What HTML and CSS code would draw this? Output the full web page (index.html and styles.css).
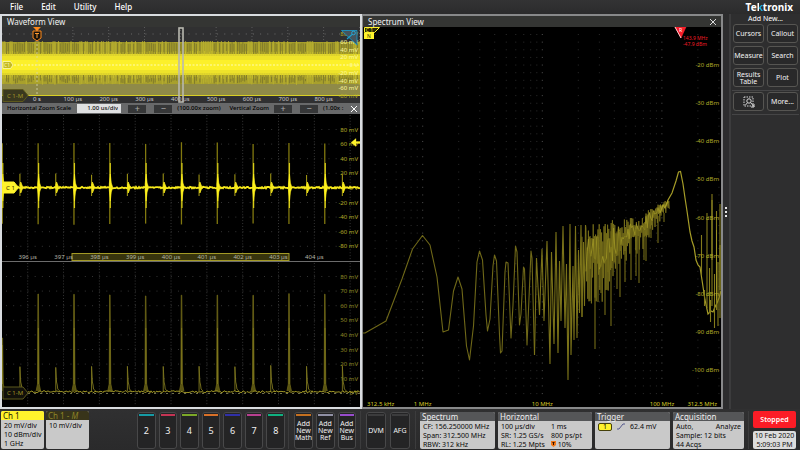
FILE: index.html
```html
<!DOCTYPE html>
<html lang="en">
<head>
<meta charset="utf-8">
<title>Tektronix</title>
<link rel="stylesheet" href="styles.css">
</head>
<body>
<header class="topbar">
  <nav class="menu">
    <button>File</button><button>Edit</button><button>Utility</button><button>Help</button>
  </nav>
  <div class="logo">Te<span class="logo-k">k</span>tronix</div>
</header>

<main class="workspace">
  <section class="view view-wave">
    <div class="view-title"><h2>Waveform View</h2></div>
    <svg class="plot plot-overview" id="overview" viewBox="2 27 358 76"></svg>
    <div class="zoombar">
      <div class="zoom-group">
        <label for="hscale">Horizontal Zoom Scale</label>
        <input id="hscale" value="1.00 us/div">
      </div>
      <div class="zoom-steps"><button>+</button><button>−</button></div>
      <span class="zoom-h">(100.00x zoom)</span>
      <span>Vertical Zoom</span>
      <div class="zoom-steps"><button>+</button><button>−</button></div>
      <span>(1.00x :</span>
      <button class="close" aria-label="Close"><svg viewBox="0 0 8 8"><path d="M1 1L7 7M7 1L1 7"/></svg></button>
    </div>
    <svg class="plot" id="zoomed" viewBox="2 114 358 148"></svg>
    <svg class="plot" id="math" viewBox="2 262 358 145"></svg>
  </section>

  <section class="view view-spectrum">
    <div class="view-title"><h2>Spectrum View</h2>
      <button class="close" aria-label="Close"><svg viewBox="0 0 8 8"><path d="M1 1L7 7M7 1L1 7"/></svg></button>
    </div>
    <svg class="plot" id="spectrum" viewBox="363 27 358 380"></svg>
  </section>

  <div class="grip"><i></i><i></i><i></i></div>

  <aside class="sidebar">
    <h2>Add New...</h2>
    <div class="side-grid">
      <button>Cursors</button><button>Callout</button>
      <button>Measure</button><button>Search</button>
      <button>Results Table</button><button>Plot</button>
    </div>
    <div class="side-grid side-more">
      <button aria-label="Zoom area">
        <svg class="area-icon" viewBox="0 0 12 12">
          <rect x="1" y="1" width="9" height="9" stroke-dasharray="1.5 1"/>
          <circle cx="6" cy="5" r="2.2"/>
          <path d="M4.5 6.7L2.5 9M7.5 6.5L11 10.5M11 8v3H8"/>
        </svg>
      </button>
      <button>More...</button>
    </div>
  </aside>
</main>

<footer class="dock">
  <div class="dock-group">
    <section class="badge badge-ch1"><h3>Ch 1</h3><p>20 mV/div</p><p>10 dBm/div</p><p>1 GHz</p></section>
    <section class="badge badge-math"><h3>Ch 1 - <em>M</em></h3><p>10 mV/div</p></section>
  </div>
  <div class="dock-group keys channels">
    <button class="c2">2</button><button class="c3">3</button><button class="c4">4</button><button class="c5">5</button><button class="c6">6</button><button class="c7">7</button><button class="c8">8</button>
  </div>
  <div class="dock-group keys adders">
    <button class="math">Add New Math</button><button class="ref">Add New Ref</button><button class="bus">Add New Bus</button>
  </div>
  <div class="dock-group keys tools">
    <button>DVM</button><button>AFG</button>
  </div>
  <div class="dock-group infos">
    <section class="badge info-spectrum"><h3>Spectrum</h3><p>CF: 156.250000 MHz</p><p>Span: 312.500 MHz</p><p>RBW: 312 kHz</p></section>
    <section class="badge info-horizontal"><h3>Horizontal</h3>
      <div class="pairs">
        <span>100 µs/div</span><span>1 ms</span>
        <span>SR: 1.25 GS/s</span><span>800 ps/pt</span>
        <span>RL: 1.25 Mpts</span><span><svg class="pos-icon" viewBox="0 0 5 6"><path d="M0 0H5V4L2.500 6L0 4Z" fill="#f07818"/><path d="M1.500 1.500H3.500M2.500 1.500V4" stroke="#301000"/></svg> 10%</span>
      </div>
    </section>
    <section class="badge info-trigger"><h3>Trigger</h3>
      <div class="trig"><b>1</b><svg viewBox="0 0 8 7"><path d="M0 6H2L6 1H8"/></svg><span>62.4 mV</span></div>
    </section>
    <section class="badge info-acq"><h3>Acquisition</h3><div class="split"><span>Auto,</span><span>Analyze</span></div><p>Sample: 12 bits</p><p>44 Acqs</p></section>
  </div>
  <div class="status">
    <button class="stopped">Stopped</button>
    <div class="clock"><span>10 Feb 2020</span><span>5:09:03 PM</span></div>
  </div>
</footer>
<script src="script.js"></script>
</body>
</html>
```

FILE: styles.css
```css
* { box-sizing: border-box; }

body {
  margin: 0;
  min-height: 100vh;
  background: #2b2b2c;
  color: #f2f2f2;
  font: 7px/9px "Noto Sans", "Open Sans", sans-serif;
}

h2, h3, p { margin: 0; font-weight: 400; font-size: inherit; }
button { margin: 0; padding: 0; border: 0; background: none; color: inherit; font: inherit; }

/* top bar */
.topbar {
  display: flex;
  justify-content: space-between;
  align-items: center;
  height: 14px;
  padding: 0 7px 0 10px;
  background: linear-gradient(#333334, #2b2b2c);
}
.menu { display: flex; gap: 18px; font-size: 8px; line-height: 12px; font-weight: 500; }
.menu button { color: #fff; }
.logo { font-size: 10px; line-height: 12px; font-weight: 700; color: #fff; }
.logo-k {
  background: linear-gradient(90deg, #fff 40%, #18b0dc 40%);
  -webkit-background-clip: text;
  background-clip: text;
  color: transparent;
}

/* workspace */
.workspace { display: grid; grid-template-columns: 362fr 361fr 6px 71px; }
.view { min-width: 0; background: #000; }
.view-wave { border: 2px solid #d9dce0; }
.view-spectrum { border: solid #88898a; border-width: 2px 2px 2px 1px; }
.view-title {
  display: flex;
  justify-content: space-between;
  align-items: center;
  height: 11px;
  padding: 0 4px 0 5px;
  background: #343533;
  font-size: 8px;
  line-height: 11px;
}
.plot { display: block; width: 100%; height: auto; background: #000; }
.plot-overview { background: #303031; }
.plot text { font-size: 6px; }
.plot .tiny { font-size: 5px; }
.close { width: 8px; height: 8px; flex: none; }
.close svg { display: block; fill: none; stroke: #dcdcdc; stroke-width: 1; }

.zoombar {
  display: flex;
  align-items: center;
  height: 11px;
  padding: 0 2px 0 5px;
  gap: 5px;
  background: #68696a;
  color: #000;
  font-size: 6px;
  font-weight: 500;
  line-height: 9px;
  white-space: nowrap;
}
.zoom-group { display: flex; gap: 6px; align-items: center; }
.zoombar input {
  width: 44px;
  height: 9px;
  padding: 0 3px;
  border: 0;
  background: #dfe0e1;
  color: #111;
  font: inherit;
  text-align: right;
}
.zoom-steps { display: flex; gap: 8px; }
.zoom-group + .zoom-steps { margin-left: 2px; }
.zoom-steps button {
  width: 18px;
  height: 8px;
  background: #363738;
  color: #a5a5a5;
  font-size: 9px;
  line-height: 8px;
}
.zoom-h { margin-right: 4px; }
.zoombar .close { margin-left: auto; }
.zoombar .close svg { stroke: #fff; }

.grip {
  display: flex;
  flex-direction: column;
  justify-content: center;
  align-items: center;
  gap: 2px;
  background: #2c2c2d;
}
.grip i { width: 2px; height: 2px; background: #e8e8e8; }

/* sidebar */
.sidebar { padding: 0 1px; border-left: 2px solid #3c3c3d; background: #2e2e2f; }
.sidebar h2 { font-size: 7px; line-height: 9px; text-align: center; color: #fff; }
.side-grid { display: grid; grid-template-columns: 1fr 1fr; gap: 3px; padding: 1px 1px 3px; border-bottom: 1px solid #454546; }
.side-more { padding-top: 1px; }
.side-grid button {
  height: 19px;
  border: 1px solid #565552;
  border-radius: 3px;
  background: #29292a;
  line-height: 7px;
  color: #f4f4f4;
}
.area-icon { display: block; width: 12px; height: 12px; margin: auto; fill: none; stroke: #d8d8d8; stroke-width: 1; }

/* bottom dock */
.dock {
  display: flex;
  height: 41px;
  padding: 2px 4px 1px 1px;
  background: linear-gradient(#303031, #2a2a2b);
}
.dock-group { display: flex; gap: 2px; }
.badge { width: 43px; border-radius: 2px; overflow: hidden; background: #c9c9c9; color: #0a0a0a; white-space: nowrap; }
.badge h3 { height: 9px; margin-bottom: 1px; padding: 0 2px; font-size: 8px; line-height: 9px; background: #555658; color: #f0f0f0; }
.badge p { padding: 0 3px; }
.badge-ch1 h3 { background: #fff32c; color: #1c1a00; }
.badge-math h3 { background: #38341a; color: #8d8428; }

.channels { margin-left: auto; width: 148px; }
.keys { gap: 3px; padding-top: 1px; }
.keys button {
  position: relative;
  flex: 1;
  border: 1px solid #484849;
  border-radius: 3px;
  background: #242425;
  line-height: 7px;
  color: #f0f0f0;
}
.keys button::before {
  content: "";
  position: absolute;
  top: 1px;
  left: 1px;
  right: 1px;
  height: 2px;
  background: #3c3c3d;
}
.channels button { font-size: 9px; }
.adders { width: 62px; margin-left: 3px; padding-left: 5px; box-sizing: content-box; border-left: 1px solid #3c3c3d; }
.tools { width: 44px; gap: 4px; margin: 0 5px 0 4px; padding-left: 5px; box-sizing: content-box; border-left: 1px solid #3c3c3d; }
.keys .c2::before { background: #169aa4; }
.keys .c3::before { background: #c43454; }
.keys .c4::before { background: #7ca828; }
.keys .c5::before { background: #d87028; }
.keys .c6::before { background: #3030a8; }
.keys .c7::before { background: #b84090; }
.keys .c8::before { background: #10b080; }
.keys .math::before { background: #c47020; }
.keys .ref::before { background: #9090a4; }
.keys .bus::before { background: #984ccc; }

.infos { gap: 3px; padding: 1px 4px 0; border: solid #3c3c3d; border-width: 0 1px; }
.info-spectrum, .info-trigger { width: 75px; }
.info-horizontal { width: 94px; }
.info-acq { width: 71px; }
.pairs { display: grid; grid-template-columns: 50px 1fr; padding: 0 3px; }
.split { display: flex; justify-content: space-between; padding: 0 3px; }
.pos-icon { width: 5px; height: 6px; }
.trig { display: flex; align-items: center; gap: 5px; padding: 0 3px; }
.trig b { width: 14px; height: 8px; border: 1px solid #45400a; border-radius: 2px; background: #fff32c; font-weight: 400; line-height: 6px; text-align: center; }
.trig svg { width: 8px; height: 7px; fill: none; stroke: #55588c; }

.status { display: flex; flex-direction: column; justify-content: space-between; width: 43px; margin-left: 4px; }
.stopped { height: 17px; border-radius: 2px; background: #fb1c26; color: #fff; font-weight: 600; }
.clock { display: flex; flex-direction: column; border-radius: 2px; background: #dcdcdc; color: #111; line-height: 9px; text-align: center; }
```

FILE: script.js
```js
const NS = "http://www.w3.org/2000/svg";

function add(svg, tag, attrs, text) {
  const el = document.createElementNS(NS, tag);
  for (const key in attrs) el.setAttribute(key, attrs[key]);
  if (text !== undefined) el.textContent = text;
  svg.appendChild(el);
  return el;
}
function path(svg, d, stroke, width = 1, extra = {}) {
  return add(svg, "path", { d, fill: "none", stroke, "stroke-width": width, ...extra });
}
function label(svg, x, y, text, fill, anchor = "middle", cls = "") {
  return add(svg, "text", { x, y: y + 2, fill, "text-anchor": anchor, class: cls }, text);
}
function makeRandom(seed) {
  return () => (seed = (seed * 16807) % 2147483647) / 2147483647;
}

const rnd = makeRandom(4217);
const DIV = 35.83;

/* Full-record overview */
function drawOverview(svg) {
  let grid = "";
  for (let x = 37; x < 360; x += DIV) grid += `M${x} 27V95`;
  path(svg, grid, "#5c5c5c", 1, { "stroke-dasharray": "1 2" });
  path(svg, "M2 34H360", "#6a6a6a", 1, { "stroke-dasharray": "1 6.17" });

  add(svg, "rect", { x: 2, y: 42, width: 358, height: 53, fill: "#8f8a48" });
  add(svg, "rect", { x: 2, y: 42, width: 358, height: 42, fill: "#a8a02c" });
  let light = "", dark = "";
  for (let x = 3; x < 360; x += 1.79) {
    if (rnd() > 0.4) dark += `M${x} ${42 + rnd() * 2}V${80 + rnd() * 4}`;
    else light += `M${x} 41V${82 + rnd() * 3}`;
  }
  path(svg, dark, "#77722a", 0.8);
  path(svg, light, "#bdb430", 0.8);
  add(svg, "rect", { x: 2, y: 54, width: 358, height: 21, fill: "#e3d82c" });
  let tips = "";
  for (let x = 3; x < 360; x += 2.4) tips += `M${x} ${51 + rnd() * 2}V${76 + rnd() * 3}`;
  path(svg, tips, "#d6cb2c", 1, { opacity: 0.6 });
  add(svg, "rect", { x: 2, y: 56, width: 358, height: 17, fill: "#eee32a" });
  add(svg, "rect", { x: 2, y: 60, width: 358, height: 10, fill: "#fcf02a" });
  path(svg, "M14 65H360", "#fffbb0", 1, { "stroke-dasharray": "2 1.500" });
  path(svg, "M2 95.500H360", "#d8cf24");
  path(svg, "M37 40V96", "#d8d8b0", 1, { "stroke-dasharray": "2 2", opacity: 0.8 });

  label(svg, 37, 99, "0 s", "#d8d8d8");
  for (let i = 1; i < 9; i++) label(svg, 37 + i * DIV, 99, i * 100 + " µs", "#c8c8c8");
  for (let i = 0; i < 9; i++) {
    const v = 80 - i * 20;
    label(svg, 358, 34 + i * 7.75, v ? v + " mV" : "0 V", i === 0 || i === 8 ? "#b5ad2c" : "#fff9a0", "end");
  }

  add(svg, "rect", { x: 179, y: 28, width: 4, height: 74, fill: "none", stroke: "#b8b8b0", "stroke-width": 1.6 });

  path(svg, "M33.500 27H40.500L37 31Z", "#ff8a1c", 0.5, { fill: "#ff8a1c" });
  path(svg, "M33 31H41V38L37 41L33 38Z", "#ff8a1c", 1, { fill: "#17120c" });
  path(svg, "M35 33.500H39M37 33.500V38", "#ff9a30", 1);

  path(svg, "M341.500 30.500H357V45Z", "#18a0d0", 0.8, { fill: "#46545c" });
  path(svg, "M352 34.500L347 39", "#18a0d0", 1.2);
  add(svg, "circle", { cx: 353.5, cy: 33, r: 1.8, fill: "#46545c", stroke: "#28b0e0", "stroke-width": 0.9 });

  path(svg, "M3 61.500H10.500L13 65L10.500 68.500H3Z", "#fffbb8", 0.8, { fill: "#c4ba24" });
  label(svg, 7, 65, "C1", "#fffbb8", "middle", "tiny");
  drawMathBadge(svg, 95.5, "#3a381f");
}

function drawMathBadge(svg, y, fill) {
  path(svg, `M3 ${y - 6}H23L28 ${y}L23 ${y + 6}H3Z`, "#5d581c", 1, { fill });
  label(svg, 7, y, "C 1-M", "#a09628", "start");
}

/* Shared dotted graticule of the zoom plots */
function drawGrid(svg, top, bottom, firstRow) {
  let cols = "", rows = "";
  for (let x = 27.7; x < 360; x += DIV) cols += `M${x} ${top}V${bottom}`;
  for (let y = firstRow; y < bottom; y += 14.6) rows += `M6 ${y}H360`;
  path(svg, cols, "#353535", 1, { "stroke-dasharray": "1 1.920" });
  path(svg, rows, "#343434", 1, { "stroke-dasharray": "1 6.166" });
}

/* Zoomed channel 1 trace */
function drawZoomed(svg) {
  drawGrid(svg, 115, 260, 129.5);
  for (let i = 0; i < 9; i++) {
    const v = 80 - i * 20;
    label(svg, 358, 129.5 + i * 14.6, v ? v + " mV" : "0 V", "#b4ab26", "end");
  }
  add(svg, "rect", { x: 72, y: 253.500, width: 217, height: 7, fill: "#37340d", stroke: "#a39a26" });
  for (let i = 0; i < 9; i++) label(svg, 27.7 + i * DIV, 256.5, 396 + i + " µs", "#b4b4a8");
  path(svg, "M2 261.500H360", "#6c6c6c");

  for (let i = 0; i < 10; i++) {
    const x = 2.3 + i * DIV;
    path(svg, `M${x} ${142 + rnd() * 2}V${223 + rnd() * 2}`, "#81780f", 1.3);
    path(svg, `M${x + .5} 163V208`, "#d8cd18", 1.2);
    path(svg, `M${x - .5} 184L${x + .5} 174L${x + 1.500} 183L${x + 3} 187.500L${x + 1.500} 192L${x + .5} 201L${x - .5} 190Z`, "#fff21c", 0.6, { fill: "#fff21c" });
    const s = x + DIV / 2 - 0.3;
    path(svg, `M${s} ${173 + rnd() * 2}V196`, "#9b9114", 1.1);
    path(svg, `M${s} 185L${s + .8} 182L${s + 3} 187.500L${s + .8} 193Z`, "#f6e91c", 0.8, { fill: "#f6e91c" });
  }
  let d = "M2 187.5";
  for (let x = 3; x <= 360; x += 1) d += `L${x} ${(187.6 + (rnd() - 0.5) * 1.6).toFixed(1)}`;
  path(svg, d, "#f7ea1c", 1.8);

  path(svg, "M3 182H14L18.500 187.500L14 193H3Z", "#fff32c", 1, { fill: "#fff32c", "stroke-linejoin": "round" });
  label(svg, 10.5, 187.5, "C 1", "#2a2600");
  path(svg, "M351 142.500L356 138.500V141.500H360V143.500H356V146.500Z", "#fff32c", 0.3, { fill: "#fff32c" });
}

/* Zoomed math trace */
function drawMath(svg) {
  drawGrid(svg, 263, 406, 276.5);
  for (let i = 0; i < 9; i++) {
    const v = 80 - i * 10;
    label(svg, 358, 276.5 + i * 14.6, v ? v + " mV" : "0 V", "#8d8620", "end");
  }
  for (let i = 0; i < 10; i++) {
    const x = 2.3 + i * DIV;
    const top = i ? 293 + rnd() * 3 : 338;
    path(svg, `M${x - 2} 391L${x - .6} 384L${x - .2} ${top}H${x + .3}L${x + 1} 384L${x + 2.500} 391`, "#6c6516", 0.8, { fill: "#575212" });
    path(svg, `M${x + .2} ${i ? 328 : 345}V384`, "#857d1e", 0.8);
    const s = x + DIV / 2 - 0.3;
    path(svg, `M${s} 391V${365 + rnd() * 3}L${s + .8} 382L${s + 1.500} 385L${s + 2} 389L${s + 4} 391`, "#7d761e", 0.9);
  }
  let d = "M28 391.5";
  for (let x = 29; x <= 360; x += 1) d += `L${x} ${(391.7 + (rnd() - 0.5) * 2).toFixed(1)}`;
  path(svg, d, "#9d9424", 1);
  path(svg, "M28 393.500H360", "#70704c", 1, { "stroke-dasharray": "2 4" });
  drawMathBadge(svg, 393, "#11100a");
}

/* Spectrum: x is log frequency, one decade = 119.6 */
function drawSpectrum(svg) {
  let minor = "", major = "";
  for (let dec = -1; dec <= 2; dec++) {
    for (let n = 1; n < 10; n++) {
      const x = 422.7 + 119.6 * (dec + Math.log10(n));
      if (x < 364 || x > 721) continue;
      if (n === 1) major += `M${x} 34V396`;
      else minor += `M${x} 34V396`;
    }
  }
  path(svg, minor, "#2c2c2c", 1, { "stroke-dasharray": "1 6.640" });
  path(svg, major, "#505050", 1, { "stroke-dasharray": "1 6.640" });

  const low = [363,333, 365,333, 386,321, 402,279, 412.5,249, 422.5,235.5, 430,245, 437,277, 443,332, 448.5,330, 453.5,291, 458,277, 462,289, 466.5,346, 469.5,360, 473.5,326, 477,262, 479.5,251, 482.5,260, 486,315, 487.5,331, 490,319, 493,266, 494.5,255, 496.5,261, 499.5,335, 500.5,353, 502,351, 505,272, 506,262, 508,263, 511,338, 513,305, 515.5,246, 517,252, 519.5,325, 521,314, 523.5,267, 524.5,269, 527,345, 531,251, 532,258, 534.5,355];
  const fast = [534.5,355, 536.5,258, 539.5,315, 542,249, 544,321, 547,241, 550,364, 551.5,252, 554,344, 556,232, 558,353, 559.5,261, 561,321, 563,226, 565,328, 566.5,264, 568,380, 570,224, 571,355, 573,266, 574,340, 575.5,226, 577,338, 578.5,250, 579.5,313, 581,225, 582,317, 583.5,242, 584.5,306, 585.5,225];
  const toPath = a => a.reduce((s, v, i) => s + (i % 2 ? " " + v : (i ? "L" : "M") + v), "");
  path(svg, toPath(low), "#6f6818", 1.1, { "stroke-linejoin": "round" });
  path(svg, toPath(fast), "#7a7219", 1.1, { "stroke-linejoin": "bevel" });

  const env = [[580,225,312],[588,224,312],[596,224,308],[605,220,298],[613,219,285],[622,220,266],[632,217,256],[640,217,254],[648,210,238],[658,204,224],[668,199,209]];
  const at = (x, k) => {
    for (let i = 1; i < env.length; i++) {
      if (x <= env[i][0]) {
        const t = (x - env[i - 1][0]) / (env[i][0] - env[i - 1][0]);
        return env[i - 1][k] + t * (env[i][k] - env[i - 1][k]);
      }
    }
    return env[env.length - 1][k];
  };
  let d = "M585.5 225", core = "";
  for (let x = 586; x < 669; x += 1.2) {
    const hi = at(x, 1), lo = at(x, 2), span = lo - hi;
    d += `L${x.toFixed(1)} ${(hi + rnd() * span * 0.3).toFixed(1)}L${(x + 0.6).toFixed(1)} ${(lo - rnd() * span * 0.55).toFixed(1)}`;
    const mid = hi + span * 0.38;
    core += (core ? "L" : "M") + `${x.toFixed(1)} ${(mid + (rnd() - 0.5) * span * 0.5).toFixed(1)}`;
  }
  path(svg, d, "#7c741c", 0.8, { "stroke-linejoin": "bevel" });
  path(svg, core, "#9c9324", 0.9, { "stroke-linejoin": "bevel" });
  const dips = [582,317, 590,301, 595,349, 598,302, 601,293, 605,315, 608,272, 611,326, 617,289, 620,297, 625,282, 631,280, 636,276, 639,283, 644,260, 646,261, 651,238, 658,243, 664,222];
  let spikes = "";
  for (let i = 0; i < dips.length; i += 2) spikes += `M${dips[i]} ${at(dips[i], 1) + 12}V${dips[i + 1]}`;
  path(svg, spikes, "#746c18", 1.1);

  path(svg, "M660 213L663 205L665 208L668 200L672 193L676 181L678.500 172L680.500 171.500L683 184L685 198L687 211L690 232L692 241L694 247L696 260L698 265L700 267L702 280L705 300L708 314L711 311L713 312L715 307L717 303L719 298L721 291", "#a69d28", 1.2);
  path(svg, "M701.500 275V235M707 308V213M712 306V194M716.500 310V211M720 318V204M709.500 313V268M714.500 328V274M718 326V262M704.500 306V290M710.500 322V300", "#847b1c", 1.1);
  path(svg, "M712 260V200M716.500 300V230M720 290V245", "#a29928", 0.8);

  const levels = [-20, -30, -40, -50, -60, -70, -80, -90, -100];
  levels.forEach((v, i) => label(svg, 719, 65 + i * 38.15, v + " dBm", "#b3ab28", "end"));
  label(svg, 367, 403.5, "312.5 kHz", "#d8ce28", "start");
  label(svg, 422.7, 403.5, "1 MHz", "#d8ce28");
  label(svg, 542.3, 403.5, "10 MHz", "#d8ce28");
  label(svg, 662, 403.5, "100 MHz", "#d8ce28");
  label(svg, 717, 403.5, "312.5 MHz", "#d8ce28", "end");

  path(svg, "M364.500 27.500H379.500L374.500 32.500H364.500Z", "#fff32c", 1, { fill: "#2a2804" });
  label(svg, 369.5, 29.5, "C 1", "#fff32c", "middle", "tiny");
  add(svg, "rect", { x: 364, y: 33, width: 10, height: 6, fill: "#fff32c" });
  label(svg, 369, 36, "N", "#2a2600", "middle", "tiny");

  path(svg, "M675 27H686L681 38Z", "#ff2a34", 0.5, { fill: "#f81c28" });
  path(svg, "M675 27L681 38", "#ffd0d0", 1);
  label(svg, 680.5, 30, "R", "#fff", "middle", "tiny");
  label(svg, 683, 37.5, "143.9 MHz", "#f01c26", "start", "tiny");
  label(svg, 683, 43.5, "-47.9 dBm", "#f01c26", "start", "tiny");
}

drawOverview(document.getElementById("overview"));
drawZoomed(document.getElementById("zoomed"));
drawMath(document.getElementById("math"));
drawSpectrum(document.getElementById("spectrum"));
```
